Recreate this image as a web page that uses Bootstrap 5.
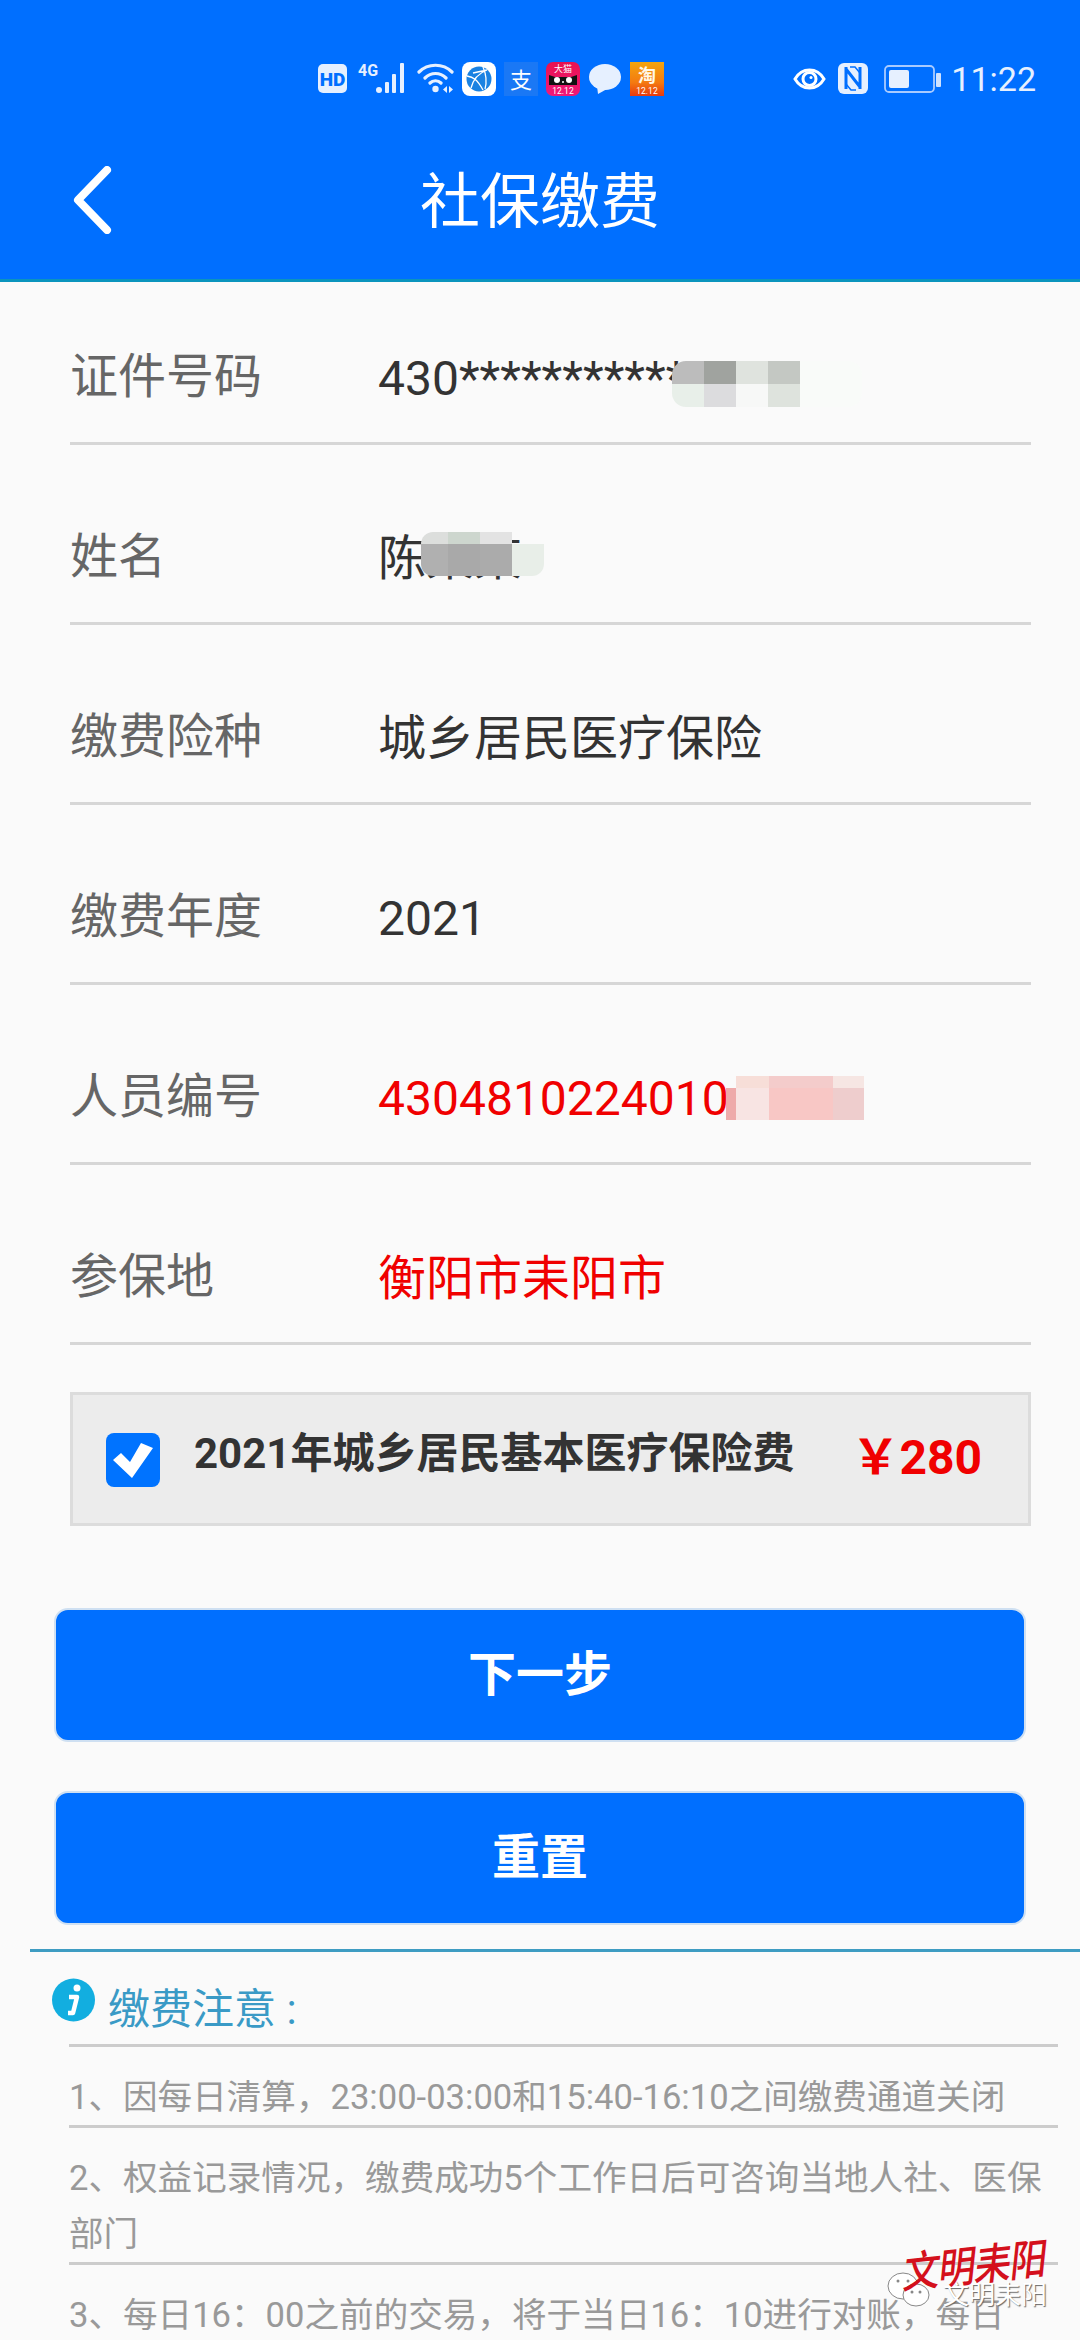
<!DOCTYPE html>
<html lang="zh">
<head>
    <meta charset="utf-8">
    <title>社保缴费</title>
    <link rel="stylesheet" href="https://cdn.jsdelivr.net/npm/bootstrap@5.3.3/dist/css/bootstrap.min.css">
    <style>
        html, body {
            height: 2340px;
            overflow: hidden;
        }
        body {
            background-color: #fafafa;
            font-family: Roboto, "Noto Sans CJK SC", sans-serif;
            color: #333;
        }
        .top-head {
            background-color: #006fff;
            border-bottom: 3px solid #0a94bd;
            height: 282px;
            padding-top: 62px;
        }
        .status-row {
            height: 34px;
            padding-left: 318px;
            padding-right: 44px;
            color: #e6f0ff;
        }
        .status-left { gap: 8px; }
        .status-right { gap: 10px; }
        .status-time { font-size: 34px; line-height: 34px; }
        .title-row {
            height: 120px;
            margin-top: 44px;
        }
        .back-cell {
            width: 160px;
            padding-left: 72px;
        }
        .head-title {
            font-size: 60px;
            font-weight: 400;
            line-height: 70px;
            padding-top: 6px;
            color: #fff;
        }
        .info-list { padding: 0 49px 0 70px; }
        .info-row {
            height: 180px;
            padding-bottom: 33px;
            border-bottom: 3px solid #d6d6d6;
        }
        .info-row:first-child { height: 163px; }
        .info-label {
            width: 308px;
            font-size: 48px;
            line-height: 60px;
            margin-bottom: 2px;
            color: #666;
        }
        .info-value {
            font-size: 48px;
            line-height: 60px;
            padding-top: 5px;
            color: #333;
        }
        .text-alert { color: #f00000; }
        .mosaic-svg {
            position: absolute;
            pointer-events: none;
        }
        .mosaic-id { left: 294px; top: 17px; }
        .mosaic-name { left: 43px; top: 8px; }
        .mosaic-num { left: 348px; top: 12px; }
        .fee-box {
            margin: 47px 49px 0 70px;
            height: 134px;
            background-color: #ececec;
            border: 3px solid #dcdcdc;
            padding-left: 33px;
            padding-right: 46px;
        }
        .fee-check.form-check-input {
            width: 54px;
            height: 54px;
            margin: 38px 34px 0 0;
            border: 0;
            border-radius: 8px;
            float: none;
            background-color: #0073ff;
            background-size: 54px 54px;
            background-image: url("data:image/svg+xml,%3Csvg xmlns='http://www.w3.org/2000/svg' viewBox='0 0 54 54'%3E%3Cpolygon fill='%23fff' points='7,27 15,20 24,29 35,10 47,15 26,45'/%3E%3C/svg%3E");
        }
        .fee-name {
            font-size: 42px;
            font-weight: 700;
            line-height: 50px;
            margin-top: 34px;
            color: #333;
        }
        .fee-price {
            font-size: 48px;
            font-weight: 700;
            line-height: 50px;
            margin-top: 38px;
            color: #f00000;
        }
        .action-wrap { margin: 82px 54px 0 54px; }
        .action-btn.btn {
            display: block;
            height: 134px;
            font-size: 48px;
            font-weight: 700;
            line-height: 122px;
            padding: 0;
            color: #fff;
            background-color: #006fff;
            border: 2px solid #cfe0f2;
            border-radius: 14px;
            margin-bottom: 49px;
        }
        .notice {
            margin-left: 30px;
            margin-top: -25px;
            border-top: 3px solid #3e9cc2;
        }
        .notice-head {
            height: 92px;
            margin-right: 22px;
            padding-top: 26px;
            padding-left: 22px;
        }
        .notice-title {
            font-size: 42px;
            line-height: 50px;
            margin-top: 7px;
            margin-left: 13px;
            color: #3a9ac6;
        }
        .notice-head-line {
            height: 3px;
            margin: 0 22px 0 39px;
            background-color: #ccc;
        }
        .notice-list { margin: 0 22px 0 39px; }
        .notice-item {
            padding-top: 22px;
            border-bottom: 3px solid #ccc;
            font-size: 34.6px;
            line-height: 56px;
            color: #999;
        }
        .watermark {
            position: absolute;
            left: 885px;
            top: 2236px;
            width: 180px;
            height: 90px;
            pointer-events: none;
        }
        .mark-red {
            position: absolute;
            left: 18px;
            top: 6px;
            font-size: 37px;
            font-weight: 500;
            line-height: 50px;
            letter-spacing: -1px;
            white-space: nowrap;
            color: #d4101c;
            transform: rotate(-6deg) skewX(-12deg) scaleY(1.15);
        }
        .mark-grey {
            position: absolute;
            left: 58px;
            top: 44px;
            font-size: 26px;
            line-height: 30px;
            white-space: nowrap;
            color: #fff;
            text-shadow: 1px 1px 1px #666;
        }
        .mark-wechat {
            position: absolute;
            left: 2px;
            top: 36px;
        }
    </style>
</head>
<body class="position-relative">

    <div class="top-head">
        <div class="status-row d-flex align-items-center justify-content-between">
            <div class="status-left d-flex align-items-center">
                <!-- HD -->
                <svg width="32" height="34" viewBox="0 0 32 34">
                    <rect x="0" y="2" width="29" height="29" rx="5" fill="#e6f0ff"/>
                    <text x="14.500" y="23.500" text-anchor="middle" font-family="Roboto" font-weight="900" font-size="19" fill="#006fff">HD</text>
                </svg>
                <!-- 4G and signal -->
                <svg width="51" height="34" viewBox="0 0 51 34">
                    <text x="0" y="14" font-family="Roboto" font-weight="700" font-size="16" fill="#e6f0ff">4G</text>
                    <circle cx="21" cy="28" r="3" fill="#e6f0ff"/>
                    <rect x="27" y="20" width="4" height="11" rx="1" fill="#e6f0ff"/>
                    <rect x="34" y="12" width="4" height="19" rx="1" fill="#e6f0ff"/>
                    <rect x="42" y="1" width="4" height="30" rx="1" fill="#e6f0ff"/>
                </svg>
                <!-- wifi -->
                <svg width="37" height="34" viewBox="0 0 37 34">
                    <path d="M2 10C11 1 26 1 35 10M8 16C14 10 23 10 29 16M13 21C16 18 21 18 24 21" fill="none" stroke="#e6f0ff" stroke-width="3.200" stroke-linecap="round"/>
                    <circle cx="18.500" cy="27" r="3.200" fill="#e6f0ff"/>
                    <path d="M30 24v7l-4-3.500zM32 24v7l4-3.500z" fill="#e6f0ff"/>
                </svg>
                <!-- browser -->
                <svg width="34" height="34" viewBox="0 0 34 34">
                    <rect width="34" height="34" rx="8" fill="#fff"/>
                    <circle cx="17" cy="17" r="12.500" fill="#1a82e2"/>
                    <path d="M5 14c6 1 10 3 16 14M9 26c2-8 8-15 16-18M21 5c3 7 4 15 2 22M11 11l14-3" fill="none" stroke="#fff" stroke-width="1.300"/>
                </svg>
                <!-- alipay -->
                <svg width="34" height="34" viewBox="0 0 34 34">
                    <rect width="34" height="34" fill="#1a78f5"/>
                    <text x="17" y="26" text-anchor="middle" font-family="Noto Sans CJK SC" font-size="22" fill="#fff">支</text>
                </svg>
                <!-- tmall -->
                <svg width="34" height="34" viewBox="0 0 34 34">
                    <defs>
                        <linearGradient id="tmallFill" x1="0" y1="0" x2="0" y2="1">
                            <stop offset="0" stop-color="#e8124f"/>
                            <stop offset="1" stop-color="#f0187a"/>
                        </linearGradient>
                    </defs>
                    <rect width="34" height="34" rx="7" fill="url(#tmallFill)"/>
                    <text x="17" y="10" text-anchor="middle" font-family="Noto Sans CJK SC" font-size="9" fill="#fff">大猫</text>
                    <path d="M3 13l6 2h16l6-2v10H3z" fill="#111"/>
                    <circle cx="11" cy="18" r="3" fill="#fff"/>
                    <circle cx="23" cy="18" r="3" fill="#fff"/>
                    <circle cx="17" cy="20" r="1" fill="#fff"/>
                    <text x="17" y="32" text-anchor="middle" font-family="Roboto" font-size="8.500" fill="#fff">12.12</text>
                </svg>
                <!-- message -->
                <svg width="34" height="34" viewBox="0 0 34 34">
                    <ellipse cx="17" cy="15" rx="16" ry="13" fill="#e6f0ff"/>
                    <path d="M9 24l1 8 9-5z" fill="#e6f0ff"/>
                </svg>
                <!-- taobao -->
                <svg width="34" height="34" viewBox="0 0 34 34">
                    <defs>
                        <linearGradient id="taobaoFill" x1="0" y1="0" x2="0" y2="1">
                            <stop offset="0" stop-color="#f4a50e"/>
                            <stop offset="0.6" stop-color="#f47a10"/>
                            <stop offset="1" stop-color="#e8390e"/>
                        </linearGradient>
                    </defs>
                    <rect width="34" height="34" fill="url(#taobaoFill)"/>
                    <text x="17" y="20" text-anchor="middle" font-family="Noto Sans CJK SC" font-weight="700" font-size="18" fill="#fff8e8">淘</text>
                    <text x="17" y="32" text-anchor="middle" font-family="Roboto" font-size="8.500" fill="#fff">12.12</text>
                </svg>
            </div>
            <div class="status-right d-flex align-items-center">
                <!-- eye -->
                <svg width="35" height="34" viewBox="0 0 35 34">
                    <path d="M2 17C9 5 24 5 31 17C24 29 9 29 2 17Z" fill="none" stroke="#fff" stroke-width="3"/>
                    <circle cx="16.500" cy="17" r="6.500" fill="none" stroke="#fff" stroke-width="3"/>
                    <circle cx="18" cy="15.500" r="1.500" fill="#fff"/>
                </svg>
                <!-- nfc -->
                <svg width="36" height="34" viewBox="0 0 36 34">
                    <rect x="0" y="1" width="30" height="31" rx="6" fill="#e6f0ff"/>
                    <path d="M8 5V27M22 5V27M8 7L22 25" fill="none" stroke="#006fff" stroke-width="3"/>
                    <path d="M12 5h5l5 6M18 28h-5l-5-6" fill="none" stroke="#006fff" stroke-width="1.500"/>
                </svg>
                <!-- battery -->
                <svg width="57" height="34" viewBox="0 0 57 34">
                    <rect x="1" y="4" width="49" height="26" rx="4" fill="none" stroke="#a9cbff" stroke-width="1.800"/>
                    <rect x="5" y="8" width="20" height="18" rx="2" fill="#e6f0ff"/>
                    <rect x="52" y="11" width="5" height="14" rx="1" fill="#cfe2ff"/>
                </svg>
                <span class="status-time">11:22</span>
            </div>
        </div>
        <div class="title-row d-flex align-items-center">
            <div class="back-cell">
                <svg class="d-block" width="40" height="68" viewBox="0 0 40 68">
                    <path d="M35 4L6 34L35 64" fill="none" stroke="#fff" stroke-width="8" stroke-linecap="round" stroke-linejoin="round"/>
                </svg>
            </div>
            <h1 class="head-title flex-grow-1 text-center m-0">社保缴费</h1>
            <div class="back-cell"></div>
        </div>
    </div>

    <div class="info-list">
        <div class="info-row d-flex align-items-end">
            <div class="info-label">证件号码</div>
            <div class="info-value position-relative">430***********
                <svg class="mosaic-svg mosaic-id" width="190" height="46" viewBox="0 0 190 46">
                    <defs><clipPath id="clipId"><rect width="190" height="46" rx="14"/></clipPath></defs>
                    <g clip-path="url(#clipId)">
                        <rect x="128" width="62" height="46" fill="#f9fbf9"/>
                        <rect width="32" height="23" fill="#bcbcbc"/>
                        <rect x="32" width="32" height="23" fill="#a0a39f"/>
                        <rect x="64" width="32" height="23" fill="#dfe3de"/>
                        <rect x="96" width="32" height="23" fill="#c4c8c3"/>
                        <rect y="23" width="32" height="23" fill="#e8efe9"/>
                        <rect x="32" y="23" width="32" height="23" fill="#dcdcde"/>
                        <rect x="64" y="23" width="32" height="23" fill="#f7f8f7"/>
                        <rect x="96" y="23" width="32" height="23" fill="#dee3dd"/>
                    </g>
                </svg>
            </div>
        </div>
        <div class="info-row d-flex align-items-end">
            <div class="info-label">姓名</div>
            <div class="info-value position-relative">陈某某
                <svg class="mosaic-svg mosaic-name" width="123" height="44" viewBox="0 0 123 44">
                    <defs><clipPath id="clipName"><rect width="123" height="44" rx="12"/></clipPath></defs>
                    <g clip-path="url(#clipName)">
                        <rect width="27" height="12" fill="#dcdedc"/>
                        <rect x="27" width="32" height="12" fill="#cdd6ce"/>
                        <rect x="59" width="32" height="12" fill="#e3e3e3"/>
                        <rect y="12" width="27" height="32" fill="#b0b0b0"/>
                        <rect x="27" y="12" width="32" height="32" fill="#a9a9a9"/>
                        <rect x="59" y="12" width="32" height="32" fill="#ababab"/>
                        <rect x="91" y="12" width="32" height="32" fill="#e8eee8"/>
                    </g>
                </svg>
            </div>
        </div>
        <div class="info-row d-flex align-items-end">
            <div class="info-label">缴费险种</div>
            <div class="info-value">城乡居民医疗保险</div>
        </div>
        <div class="info-row d-flex align-items-end">
            <div class="info-label">缴费年度</div>
            <div class="info-value">2021</div>
        </div>
        <div class="info-row d-flex align-items-end">
            <div class="info-label">人员编号</div>
            <div class="info-value text-alert position-relative">4304810224010
                <svg class="mosaic-svg mosaic-num" width="138" height="44" viewBox="0 0 138 44">
                    <rect x="10" width="33" height="12" fill="#f7ded8"/>
                    <rect x="43" width="32" height="12" fill="#f4cccb"/>
                    <rect x="75" width="32" height="12" fill="#f4cccb"/>
                    <rect x="107" width="31" height="12" fill="#f6e6e3"/>
                    <rect y="12" width="10" height="32" fill="#eeaaaa"/>
                    <rect x="10" y="12" width="33" height="32" fill="#f8e4e3"/>
                    <rect x="43" y="12" width="32" height="32" fill="#f8c7c5"/>
                    <rect x="75" y="12" width="32" height="32" fill="#f8c7c5"/>
                    <rect x="107" y="12" width="31" height="32" fill="#eecdcd"/>
                </svg>
            </div>
        </div>
        <div class="info-row d-flex align-items-end">
            <div class="info-label">参保地</div>
            <div class="info-value text-alert">衡阳市耒阳市</div>
        </div>
    </div>

    <div class="fee-box d-flex align-items-start">
        <input class="form-check-input fee-check" type="checkbox" checked>
        <div class="fee-name">2021年城乡居民基本医疗保险费</div>
        <div class="fee-price ms-auto">￥280</div>
    </div>

    <div class="action-wrap">
        <button class="btn action-btn w-100" type="button">下一步</button>
        <button class="btn action-btn w-100" type="button">重置</button>
    </div>

    <div class="notice">
        <div class="notice-head d-flex align-items-start">
            <svg width="43" height="44" viewBox="0 0 43 44">
                <circle cx="21.500" cy="22" r="21.500" fill="#12aee0"/>
                <circle cx="25" cy="10" r="3.500" fill="#fff"/>
                <path d="M17 19h8l-4 16h-5" fill="none" stroke="#fff" stroke-width="4.500" stroke-linejoin="round"/>
            </svg>
            <div class="notice-title">缴费注意 :</div>
        </div>
        <div class="notice-head-line"></div>
        <div class="notice-list">
            <div class="notice-item">1、因每日清算，23:00-03:00和15:40-16:10之间缴费通道关闭</div>
            <div class="notice-item">2、权益记录情况，缴费成功5个工作日后可咨询当地人社、医保部门</div>
            <div class="notice-item">3、每日16：00之前的交易，将于当日16：10进行对账，每日</div>
        </div>
    </div>

    <div class="watermark">
        <svg class="mark-wechat" width="44" height="36" viewBox="0 0 44 36">
            <ellipse cx="16" cy="14" rx="15" ry="13" fill="#fff" stroke="#888" stroke-width="1"/>
            <ellipse cx="29" cy="23" rx="13" ry="11" fill="#fff" stroke="#888" stroke-width="1"/>
            <circle cx="11" cy="9" r="1.500" fill="#888"/>
            <circle cx="21" cy="9" r="1.500" fill="#888"/>
            <circle cx="25" cy="20" r="1.500" fill="#888"/>
            <circle cx="33" cy="20" r="1.500" fill="#888"/>
        </svg>
        <div class="mark-grey">文明耒阳</div>
        <div class="mark-red">文明耒阳</div>
    </div>

    <script src="https://cdn.jsdelivr.net/npm/bootstrap@5.3.3/dist/js/bootstrap.bundle.min.js"></script>
</body>
</html>
